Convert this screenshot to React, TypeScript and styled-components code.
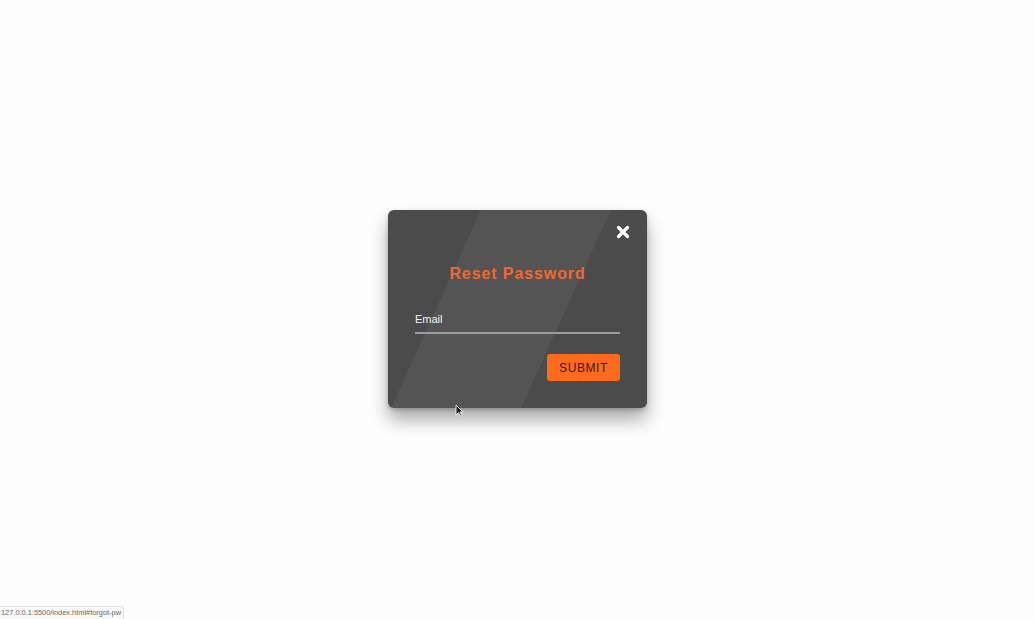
import React from "react";
import styled, { createGlobalStyle } from "styled-components";

const Global = createGlobalStyle`
  html, body { margin: 0; padding: 0; }
  body { background: #fdfdfd; font-family: "Liberation Sans", Arial, sans-serif; }
`;

const Page = styled.div`
  min-height: 618px;
  display: flex;
  align-items: center;
  justify-content: center;
`;

const Card = styled.div`
  position: relative;
  width: 259px;
  height: 198px;
  box-sizing: border-box;
  padding: 54px 27px 27px;
  background: #4b4b4b;
  border-radius: 6px;
  overflow: hidden;
  box-shadow: 0 12px 18px rgba(0, 0, 0, 0.32), 0 2px 4px rgba(0, 0, 0, 0.2);
  display: flex;
  flex-direction: column;
  &::before {
    content: "";
    position: absolute;
    top: 0;
    bottom: 0;
    left: 48px;
    width: 130px;
    background: rgba(255, 255, 255, 0.055);
    transform: skewX(-24.4deg);
    pointer-events: none;
  }
`;

const Close = styled.button`
  position: absolute;
  top: 15px;
  right: 17px;
  width: 14px;
  height: 14px;
  padding: 0;
  border: none;
  background: none;
  cursor: pointer;
  display: flex;
`;

const Title = styled.h2`
  position: relative;
  margin: 0;
  font-size: 16px;
  line-height: 20px;
  font-weight: 700;
  letter-spacing: 0.9px;
  color: #f0692f;
  text-align: center;
`;

const Field = styled.label`
  position: relative;
  margin-top: 28px;
  display: flex;
  flex-direction: column;
  border-bottom: 2px solid #9c9c9c;
  padding-bottom: 6px;
`;

const FieldLabel = styled.span`
  font-size: 11px;
  line-height: 14px;
  color: #f4f4f4;
`;

const Actions = styled.div`
  position: relative;
  margin-top: auto;
  display: flex;
  justify-content: flex-end;
`;

const Submit = styled.button`
  width: 73px;
  height: 27px;
  border: none;
  border-radius: 3px;
  background: #ff6a1d;
  color: #33201a;
  font-family: "Liberation Sans", Arial, sans-serif;
  font-size: 12px;
  letter-spacing: 0.6px;
  cursor: pointer;
`;

const Status = styled.div`
  position: fixed;
  left: 0;
  bottom: 0;
  height: 12px;
  padding: 0 2px 0 1px;
  border: 1px solid #e2e2e2;
  border-left: none;
  border-bottom: none;
  border-top-right-radius: 3px;
  background: #f8f8f8;
  color: #6a6a6a;
  font-size: 7.4px;
  line-height: 12px;
`;

const Cursor = styled.svg`
  position: fixed;
  left: 455px;
  top: 404px;
`;

export default function App() {
  return (
    <>
      <Global />
      <Page>
        <Card>
          <Close aria-label="close">
            <svg width="14" height="14" viewBox="0 0 14 14">
              <path d="M2.5 2.5 L11.5 11.5 M11.5 2.5 L2.5 11.5" stroke="#ffffff" strokeWidth="3.2" strokeLinecap="round" />
            </svg>
          </Close>
          <Title>Reset Password</Title>
          <Field>
            <FieldLabel>Email</FieldLabel>
          </Field>
          <Actions>
            <Submit>SUBMIT</Submit>
          </Actions>
        </Card>
      </Page>
      <Cursor width="9" height="13" viewBox="0 0 9 13">
        <path d="M1 1 L1 11 L3.5 8.6 L5.2 12 L6.6 11.3 L5 8 L8 8 Z" fill="#222" stroke="#fff" strokeWidth="0.8" />
      </Cursor>
      <Status>127.0.0.1:5500/index.html#forgot-pw</Status>
    </>
  );
}
